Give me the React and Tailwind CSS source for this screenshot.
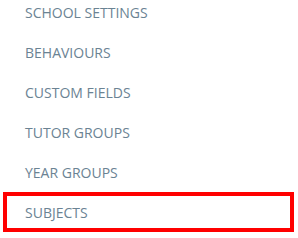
const items = ['SCHOOL SETTINGS', 'BEHAVIOURS', 'CUSTOM FIELDS', 'TUTOR GROUPS', 'YEAR GROUPS']

export default function App() {
  return (
    <div className="w-[298px] h-[238px] overflow-hidden bg-white font-['Open_Sans',sans-serif] text-[14px] text-[#6b8393]">
      <ul className="-mt-2">
        {items.map(label => (
          <li key={label} className="h-10 leading-[39px] pt-px pl-[25px]">{label}</li>
        ))}
        <li className="ml-[3px] w-[291px] h-10 border-4 border-[#ff0000] leading-[31px] pt-px pl-[18px]">SUBJECTS</li>
      </ul>
    </div>
  )
}
